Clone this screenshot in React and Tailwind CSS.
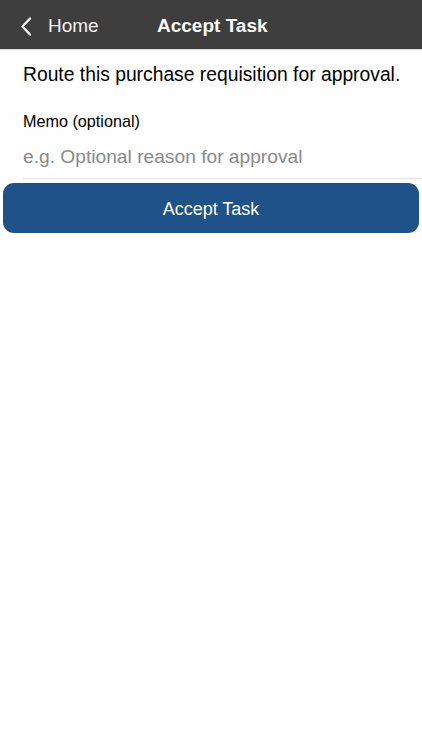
export default function App() {
  return (
    <div className="min-h-[750px] bg-[#fefefe] font-['Liberation_Sans',Arial,sans-serif]">
      <header className="h-[50px] pt-[3px] bg-[#3e3e3e] border-b border-[#d8d8d8] flex items-center relative">
        <div className="flex items-center pl-[20px] text-[#f2f2f2]">
          <svg width="12" height="19" viewBox="0 0 12 19" fill="none">
            <path d="M10 1.5L2.5 9.5L10 17.5" stroke="currentColor" strokeWidth="2.4" strokeLinecap="round" strokeLinejoin="round" />
          </svg>
          <span className="ml-[16px] text-[19px]">Home</span>
        </div>
        <h1 className="absolute left-[157px] text-[19px] font-bold text-white">Accept Task</h1>
      </header>

      <main>
        <p className="pl-[23px] pt-[13px] text-[19.3px] text-black leading-[24px]">
          Route this purchase requisition for approval.
        </p>
        <label className="block pl-[23px] mt-[24px] text-[16.2px] text-black leading-[20px]">
          Memo (optional)
        </label>
        <div className="ml-[23px] mt-[14px] border-b border-[#e2e2e2] h-[34px]">
          <input
            className="w-full outline-none bg-transparent text-[19.2px] placeholder:text-[#8a8a8a] leading-[24px]"
            placeholder="e.g. Optional reason for approval"
          />
        </div>
        <div className="px-[3px] mt-[4px]">
          <button className="w-full h-[50px] pt-[3px] rounded-[11px] bg-[#1f5288] text-white text-[18px]">
            Accept Task
          </button>
        </div>
      </main>
    </div>
  );
}
